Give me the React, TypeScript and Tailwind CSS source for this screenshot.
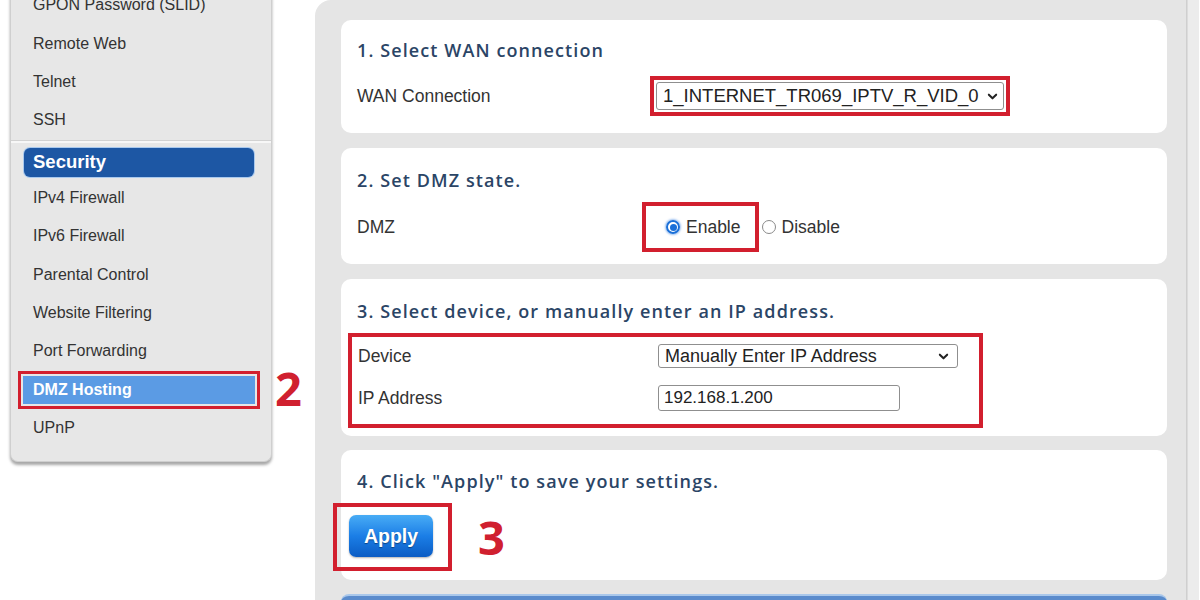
import React, { useState } from 'react';

const sans = { fontFamily: '"Liberation Sans", Arial, sans-serif' };
const openSans = { fontFamily: '"Open Sans", sans-serif' };

const topItems = ['GPON Password (SLID)', 'Remote Web', 'Telnet', 'SSH'];
const securityItems = ['IPv4 Firewall', 'IPv6 Firewall', 'Parental Control', 'Website Filtering', 'Port Forwarding', 'DMZ Hosting', 'UPnP'];

const Chevron = () => (
  <svg className="w-[11px] h-[11px]" viewBox="0 0 12 12" fill="none">
    <path d="M2 4l4 4 4-4" stroke="#222" strokeWidth="2.2" strokeLinecap="round" strokeLinejoin="round" />
  </svg>
);

const Radio = ({ checked }: { checked: boolean }) => (
  <span
    className={`w-[14px] h-[14px] rounded-full flex items-center justify-center shrink-0 ${
      checked ? 'border-[2px] border-[#1a6fd8] shadow-[0_0_2px_1px_rgba(90,150,230,0.6)]' : 'border border-[#8a8a8a] bg-white'
    }`}
  >
    {checked && <span className="w-[7px] h-[7px] rounded-full bg-[#1a6fd8]" />}
  </span>
);

const Sidebar = () => (
  <aside
    className="w-[262px] ml-[10px] -mt-[14px] self-start bg-[#e7e7e7] border-x border-b border-[#cfcfcf] rounded-b-[8px] pb-[14px] shadow-[0_3px_3px_rgba(0,0,0,0.35)] text-[16px] text-[#333]"
    style={sans}
  >
    {topItems.map(item => (
      <div key={item} className="h-[38.4px] flex items-center pl-[22px]">{item}</div>
    ))}
    <div className="border-t border-[#d2d2d2] border-b-[2px] border-b-[#f7f7f7]" />
    <div className="mt-[5px] ml-[13px] mr-[17px] h-[29px] rounded-[6px] bg-[#1d57a4] ring-1 ring-[#a9c9ee] flex items-center pl-[9px] text-white font-bold text-[18.5px]">
      Security
    </div>
    <div className="pt-[2px]">
      {securityItems.map(item =>
        item === 'DMZ Hosting' ? (
          <div key={item} className="relative h-[38.4px] flex items-center">
            <div className="ml-[7px] w-[242px] h-[38px] border-[3px] border-[#d21f2e] p-[2px]">
              <div className="h-full bg-[#5b9be4] flex items-center pl-[10px] text-white font-bold">{item}</div>
            </div>
            <span className="absolute left-[264px] top-[-6px] text-[47px] font-bold text-[#d0202f] leading-none" style={openSans}>
              2
            </span>
          </div>
        ) : (
          <div key={item} className="h-[38.4px] flex items-center pl-[22px]">{item}</div>
        )
      )}
    </div>
  </aside>
);

const Heading = ({ children }: { children: React.ReactNode }) => (
  <h3 className="text-[18px] leading-[24px] font-semibold tracking-[1.1px] text-[#2b4566]" style={openSans}>
    {children}
  </h3>
);

export default function App() {
  const [dmz, setDmz] = useState(true);

  return (
    <div className="w-[1200px] h-[600px] overflow-hidden bg-white flex items-start">
      <Sidebar />

      <main
        className="ml-[43px] w-[872px] h-[600px] bg-[#e5e5e5] rounded-tl-[16px] border-r border-[#cfcfcf] pt-[20px] pl-[26px] pr-[19px] flex flex-col text-[17.5px] leading-[20px] text-[#333]"
        style={sans}
      >
        {/* 1 */}
        <section className="h-[113px] shrink-0 bg-white rounded-[10px] pt-[18px] px-[16px]">
          <Heading>1. Select WAN connection</Heading>
          <div className="mt-[14px] flex items-center">
            <span className="w-[293px]">WAN Connection</span>
            <div className="border-[4px] border-[#d21f2e] p-[2px]">
              <div className="w-[348px] h-[28px] border border-[#8f8f8f] rounded-[3px] bg-white flex items-center justify-between pl-[6px] pr-[5px] text-[18.5px] text-[#222]">
                <span>1_INTERNET_TR069_IPTV_R_VID_0</span>
                <Chevron />
              </div>
            </div>
          </div>
        </section>

        {/* 2 */}
        <section className="h-[116px] shrink-0 mt-[15px] bg-white rounded-[10px] pt-[20px] px-[16px]">
          <Heading>2. Set DMZ state.</Heading>
          <div className="mt-[10px] flex items-center">
            <span className="w-[285px]">DMZ</span>
            <label className="h-[50px] border-[4px] border-[#d21f2e] pl-[20px] pr-[14px] flex items-center gap-[6px] cursor-pointer" onClick={() => setDmz(true)}>
              <Radio checked={dmz} />
              <span>Enable</span>
            </label>
            <label className="ml-[3px] flex items-center gap-[6px] cursor-pointer" onClick={() => setDmz(false)}>
              <Radio checked={!dmz} />
              <span>Disable</span>
            </label>
          </div>
        </section>

        {/* 3 */}
        <section className="h-[157px] shrink-0 mt-[15px] bg-white rounded-[10px] pt-[20px] px-[16px]">
          <Heading>3. Select device, or manually enter an IP address.</Heading>
          <div className="mt-[10px] -ml-[9px] w-[635px] h-[95px] border-[4px] border-[#d21f2e] pt-[7px] pl-[6px]">
            <div className="h-[24px] flex items-center">
              <span className="w-[300px]">Device</span>
              <div className="w-[300px] h-[24px] border border-[#8f8f8f] rounded-[3px] flex items-center justify-between pl-[6px] pr-[8px] text-[18px] text-[#222]">
                <span>Manually Enter IP Address</span>
                <Chevron />
              </div>
            </div>
            <div className="mt-[17px] h-[26px] flex items-center">
              <span className="w-[300px]">IP Address</span>
              <input
                className="w-[242px] h-[26px] border border-[#8f8f8f] rounded-[3px] px-[5px] text-[17px] text-[#222] outline-none"
                defaultValue="192.168.1.200"
                style={sans}
              />
            </div>
          </div>
        </section>

        {/* 4 */}
        <section className="h-[130px] shrink-0 mt-[14px] bg-white rounded-[10px] pt-[19px] px-[16px]">
          <Heading>4. Click "Apply" to save your settings.</Heading>
          <div className="mt-[10px] flex items-center">
            <div className="-ml-[24px] w-[119px] h-[68px] border-[4px] border-[#d21f2e] pt-[8px] pl-[12px]">
              <button className="w-[84px] h-[42px] rounded-[7px] bg-gradient-to-b from-[#48acf5] via-[#1b7ee6] to-[#0b5cc4] text-white font-bold text-[19.5px] shadow-[0_1px_2px_rgba(0,0,0,0.3)] [text-shadow:0_1px_1px_rgba(0,0,0,0.4)]">
                Apply
              </button>
            </div>
            <span className="ml-[26px] text-[47px] font-bold text-[#d0202f] leading-none" style={openSans}>
              3
            </span>
          </div>
        </section>

        <div className="shrink-0 mt-[14px] h-[20px] rounded-t-[8px] bg-[#5a8bcc] border-t-[2px] border-[#a9c7ea]" />
      </main>

      <div className="w-[12px] h-[600px] bg-[#ececec] border-l border-[#dcdcdc]" />
    </div>
  );
}
